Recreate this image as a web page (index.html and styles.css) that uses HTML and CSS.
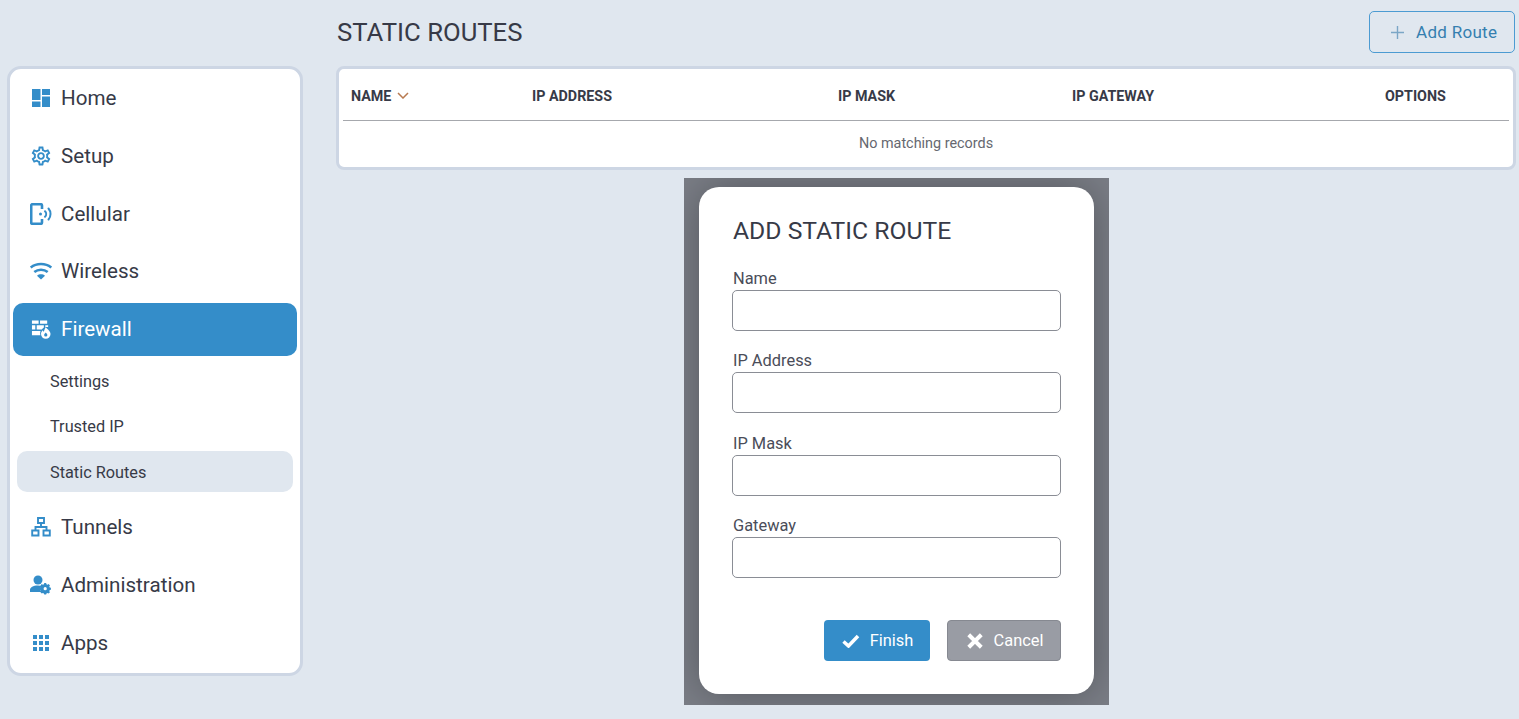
FILE: index.html
```html
<!DOCTYPE html>
<html lang="en">
<head>
    <meta charset="UTF-8">
    <title>Static Routes</title>
    <link rel="stylesheet" href="styles.css">
</head>
<body>
    <div class="page">
        <nav class="sidebar">
            <a class="nav-item">
                <svg class="nav-icon" viewBox="0 0 20 20"><path d="M1 1h8.500v11H1zM11 1h8v6h-8zM1 13.500h8.500V19H1zM11 8.500h8V19h-8z"/></svg>
                Home
            </a>
            <a class="nav-item">
                <svg class="nav-icon" viewBox="1.500 1.500 21 21"><path d="M19.43 12.98c.04-.32.07-.64.07-.98 0-.34-.03-.66-.07-.98l2.11-1.65c.19-.15.24-.42.12-.64l-2-3.46c-.09-.16-.26-.25-.44-.25-.06 0-.12.01-.17.03l-2.49 1c-.52-.4-1.08-.73-1.69-.98l-.38-2.65C14.46 2.18 14.25 2 14 2h-4c-.25 0-.46.18-.49.42l-.38 2.65c-.61.25-1.17.59-1.69.98l-2.49-1c-.06-.02-.12-.03-.18-.03-.17 0-.34.09-.43.25l-2 3.46c-.13.22-.07.49.12.64l2.11 1.65c-.04.32-.07.65-.07.98 0 .33.03.66.07.98l-2.11 1.65c-.19.15-.24.42-.12.64l2 3.46c.09.16.26.25.44.25.06 0 .12-.01.17-.03l2.49-1c.52.4 1.08.73 1.69.98l.38 2.65c.03.24.24.42.49.42h4c.25 0 .46-.18.49-.42l.38-2.65c.61-.25 1.17-.59 1.69-.98l2.49 1c.06.02.12.03.18.03.17 0 .34-.09.43-.25l2-3.46c.12-.22.07-.49-.12-.64l-2.11-1.65zm-1.98-1.71c.04.31.05.52.05.73 0 .21-.02.43-.05.73l-.14 1.13.89.7 1.08.84-.7 1.21-1.27-.51-1.04-.42-.9.68c-.43.32-.84.56-1.25.73l-1.06.43-.16 1.13-.2 1.35h-1.4l-.19-1.35-.16-1.13-1.06-.43c-.43-.18-.83-.41-1.23-.71l-.91-.7-1.06.43-1.27.51-.7-1.21 1.08-.84.89-.7-.14-1.13c-.03-.31-.05-.54-.05-.74s.02-.43.05-.73l.14-1.13-.89-.7-1.08-.84.7-1.21 1.27.51 1.04.42.9-.68c.43-.32.84-.56 1.25-.73l1.06-.43.16-1.13.2-1.35h1.39l.19 1.35.16 1.13 1.06.43c.43.18.83.41 1.23.71l.91.7 1.06-.43 1.27-.51.7 1.21-1.07.85-.89.7.14 1.13zM12 8c-2.21 0-4 1.790-4 4s1.790 4 4 4 4-1.790 4-4-1.790-4-4-4zm0 6c-1.100 0-2-.9-2-2s.9-2 2-2 2 .9 2 2-.9 2-2 2z"/></svg>
                Setup
            </a>
            <a class="nav-item">
                <svg class="nav-icon nav-icon-wide" viewBox="0 0 22 22"><path class="nav-stroke-flat" d="M12 6V2.500A1.300 1.300 0 0 0 10.700 1.200H2.500A1.300 1.300 0 0 0 1.200 2.500v17a1.300 1.300 0 0 0 1.300 1.300h8.200a1.300 1.300 0 0 0 1.300-1.300V16"/><circle cx="10.500" cy="11" r="1.500"/><path class="nav-stroke" d="M15 8.200a4 4 0 0 1 0 5.600M18.500 5.500a8.500 8.500 0 0 1 0 11"/></svg>
                Cellular
            </a>
            <a class="nav-item">
                <svg class="nav-icon nav-icon-wide" viewBox="0 0 22 20"><path class="nav-stroke-flat" d="M.7 6.500c5.800-4.700 14.800-4.700 20.600 0M4.300 11c3.800-3 9.600-3 13.400 0"/><path d="M11 18.500 7 14.700c2.300-1.800 5.700-1.800 8 0z"/></svg>
                Wireless
            </a>
            <a class="nav-item nav-item-active">
                <svg class="nav-icon" viewBox="0 0 21 20"><path d="M1 1h7v3.500H1zM9.500 1H17v3.500H9.500zM1 6h3.500v4.500H1zM6 6h7.500v2.400a7 7 0 0 0-2.200 2.100H6zM15 6h3v1.800h-3zM1 12h9a7 7 0 0 0-.2 4.500H1z"/><path fill-rule="evenodd" d="M15.500 8c.5 1.800 5 3.800 5 7.300a5 5 0 0 1-10 0c0-1.800 1-3.200 1.900-4 .2 1 .6 1.400 1.100 1.500.5-1.300 1.200-3.300 2-4.800zm0 5.700c-.3.800-1.700 1.300-1.700 2.500a1.700 1.700 0 0 0 3.400 0c0-1.200-1.400-1.700-1.700-2.500z"/></svg>
                Firewall
            </a>
            <div class="subnav">
                <a class="subnav-item">Settings</a>
                <a class="subnav-item">Trusted IP</a>
                <a class="subnav-item subnav-item-active">Static Routes</a>
            </div>
            <a class="nav-item">
                <svg class="nav-icon" viewBox="0 0 20 20"><path class="nav-line" d="M7 1h6v5H7zM1.200 13.500h6.300v5H1.200zM12.500 13.500h6.300v5h-6.300zM10 6v4M4.500 13.500V10h11v3.500"/></svg>
                Tunnels
            </a>
            <a class="nav-item">
                <svg class="nav-icon nav-icon-wide" viewBox="0 0 22 19"><circle cx="8" cy="4.500" r="4.500"/><path d="M0 16.500v-2C0 12 3 10 8 10c1.500 0 2.700.2 3.700.5a5 5 0 0 0-.2 6z"/><path fill-rule="evenodd" d="M15 9.500h2l.3 1.300 1.200.5 1.100-.7 1.400 1.400-.7 1.100.5 1.200 1.200.3v2l-1.200.3-.5 1.200.7 1.100-1.400 1.400-1.100-.7-1.200.5-.3 1.200h-2l-.3-1.200-1.200-.5-1.100.7-1.400-1.400.7-1.100-.5-1.200-1.200-.3v-2l1.200-.3.5-1.200-.7-1.100 1.400-1.400 1.100.7 1.200-.5zm1 4.300a1.700 1.700 0 1 0 0 3.400 1.700 1.700 0 0 0 0-3.400z" transform="translate(0 -1.500) scale(.95)"/></svg>
                Administration
            </a>
            <a class="nav-item">
                <svg class="nav-icon" viewBox="0 0 20 20"><path d="M2 2h4v4H2zM8 2h4v4H8zM14 2h4v4h-4zM2 8h4v4H2zM8 8h4v4H8zM14 8h4v4h-4zM2 14h4v4H2zM8 14h4v4H8zM14 14h4v4h-4z"/></svg>
                Apps
            </a>
        </nav>

        <main class="content">
            <header class="content-header">
                <h1 class="page-title">STATIC ROUTES</h1>
                <button class="btn-add">
                    <svg class="btn-add-icon" viewBox="0 0 14 14"><path d="M7 0v14M0 7h14"/></svg>
                    Add Route
                </button>
            </header>

            <section class="card">
                <table class="routes-table">
                    <colgroup>
                        <col class="col-name">
                        <col class="col-ip">
                        <col class="col-mask">
                        <col class="col-gateway">
                        <col>
                    </colgroup>
                    <thead>
                        <tr>
                            <th>NAME <svg class="sort-icon" viewBox="0 0 12 7"><path d="M1 1l5 5 5-5"/></svg></th>
                            <th>IP ADDRESS</th>
                            <th>IP MASK</th>
                            <th>IP GATEWAY</th>
                            <th>OPTIONS</th>
                        </tr>
                    </thead>
                    <tbody>
                        <tr>
                            <td class="empty-row" colspan="5">No matching records</td>
                        </tr>
                    </tbody>
                </table>
            </section>
        </main>
    </div>

    <div class="modal-frame">
        <form class="modal">
            <h2 class="modal-title">ADD STATIC ROUTE</h2>
            <div class="field">
                <label class="field-label" for="routeName">Name</label>
                <input class="field-input" id="routeName" type="text">
            </div>
            <div class="field">
                <label class="field-label" for="routeIp">IP Address</label>
                <input class="field-input" id="routeIp" type="text">
            </div>
            <div class="field">
                <label class="field-label" for="routeMask">IP Mask</label>
                <input class="field-input" id="routeMask" type="text">
            </div>
            <div class="field">
                <label class="field-label" for="routeGateway">Gateway</label>
                <input class="field-input" id="routeGateway" type="text">
            </div>
            <div class="modal-actions">
                <button class="btn btn-primary" type="button">
                    <svg class="btn-icon" viewBox="0 0 18 14"><path d="M1.500 7.500l5 4.500L16 2"/></svg>
                    Finish
                </button>
                <button class="btn btn-secondary" type="button">
                    <svg class="btn-icon btn-icon-x" viewBox="0 0 14 14"><path d="M1.500 1.500l11 11M12.500 1.500l-11 11"/></svg>
                    Cancel
                </button>
            </div>
        </form>
    </div>
</body>
</html>
```

FILE: styles.css
```css
* {
    margin: 0;
    padding: 0;
    box-sizing: border-box;
}

body {
    width: 100vw;
    height: 100vh;
    background: #e0e7ef;
    color: #373a47;
    position: relative;
    overflow: hidden;
    font-family: Roboto, "Liberation Sans", sans-serif;
}

.page {
    display: flex;
    align-items: flex-start;
    padding-left: 7px;
}

/* Sidebar */
.sidebar {
    width: 296px;
    height: 610px;
    margin-top: 66px;
    padding: 3px;
    background: white;
    border: 3px solid #cdd6e4;
    border-radius: 14px;
    display: flex;
    flex-direction: column;
}

.nav-item {
    height: 53px;
    flex: none;
    margin-bottom: 4.8px;
    padding-left: 18px;
    padding-bottom: 0.8px;
    display: flex;
    align-items: center;
    gap: 10px;
    font-size: 20.6px;
    border-radius: 10px;
}

.nav-icon {
    width: 20px;
    height: 20px;
    flex: none;
    fill: #348dc9;
}

.nav-icon-wide {
    width: 22px;
    height: 22px;
    margin-left: -1px;
    margin-right: -1px;
}

.nav-stroke {
    fill: none;
    stroke: #348dc9;
    stroke-width: 2;
    stroke-linecap: round;
}

.nav-stroke-flat {
    fill: none;
    stroke: #348dc9;
    stroke-width: 2.600;
}

.nav-line {
    fill: none;
    stroke: #348dc9;
    stroke-width: 1.900;
}

.nav-item-active {
    background: #348dc9;
    color: white;
}

.nav-item-active .nav-icon {
    fill: white;
}

.subnav {
    display: flex;
    flex-direction: column;
    gap: 4.5px;
    padding: 0 4px;
    margin-top: -0.5px;
    margin-bottom: 8.4px;
}

.subnav-item {
    height: 41px;
    padding-left: 33px;
    padding-top: 1px;
    display: flex;
    align-items: center;
    font-size: 16.3px;
    border-radius: 10px;
}

.subnav-item-active {
    background: #e0e7ef;
}

/* Main content */
.content {
    width: 1180px;
    margin-left: 33px;
}

.content-header {
    height: 66px;
    display: flex;
    justify-content: space-between;
    align-items: flex-start;
}

.page-title {
    margin: 17px 0 0 1px;
    font-size: 25.7px;
    font-weight: 400;
    line-height: 30px;
}

.btn-add {
    width: 146px;
    height: 42px;
    margin: 11px 1px 0 0;
    padding-left: 21px;
    display: flex;
    align-items: center;
    gap: 12px;
    background: transparent;
    color: #357fb0;
    border: 1px solid #4c9bd2;
    border-radius: 5px;
    font-family: inherit;
    font-size: 17px;
    letter-spacing: 0.3px;
}

.btn-add-icon {
    width: 13px;
    height: 13px;
    fill: none;
    stroke: #7ba6c6;
    stroke-width: 1.500;
}

.card {
    height: 104px;
    padding: 0 4px;
    background: white;
    border: 3px solid #cdd6e4;
    border-radius: 8px;
}

.routes-table {
    width: 100%;
    table-layout: fixed;
    border-collapse: collapse;
}

.col-name { width: 181px; }
.col-ip { width: 306px; }
.col-mask { width: 234px; }
.col-gateway { width: 313px; }

.routes-table th {
    height: 51px;
    padding: 3px 8px 0;
    text-align: left;
    font-size: 14.3px;
    font-weight: 700;
    border-bottom: 1px solid #a6a8ad;
}

.sort-icon {
    width: 12px;
    height: 7px;
    margin-left: 2px;
    vertical-align: 2px;
    fill: none;
    stroke: #b87a50;
    stroke-width: 1.500;
}

.empty-row {
    height: 46px;
    text-align: center;
    font-size: 14.4px;
    color: #666870;
}

/* Dialog */
.modal-frame {
    position: absolute;
    left: 684px;
    top: 178px;
    width: 425px;
    height: 527px;
    padding: 9px 15px 11px;
    background: #7b7e86;
    overflow: hidden;
}

.modal {
    height: 507px;
    padding: 29px 33px 33px;
    background: white;
    border-radius: 20px;
    box-shadow: 0 0 40px #55585f;
}

.modal-title {
    margin-bottom: 22.8px;
    margin-left: 1px;
    font-size: 24.7px;
    font-weight: 400;
    line-height: 30px;
}

.field {
    margin-bottom: 20.4px;
}

.field-label {
    display: block;
    margin-left: 1px;
    margin-bottom: 2.1px;
    font-size: 16.400px;
    line-height: 19px;
    color: #4a4d59;
}

.field-input {
    display: block;
    width: 329px;
    height: 41px;
    background: white;
    border: 1px solid #8a8d95;
    border-radius: 5px;
}

.modal-actions {
    margin-top: 41.6px;
    display: flex;
    justify-content: flex-end;
    gap: 17px;
}

.btn {
    height: 41px;
    padding-top: 1px;
    display: flex;
    align-items: center;
    justify-content: center;
    border: 1px solid transparent;
    border-radius: 4px;
    color: white;
    font-family: inherit;
    font-size: 16.400px;
}

.btn-icon {
    height: 14px;
    width: 18px;
    fill: none;
    stroke: white;
    stroke-width: 3.500;
}

.btn-icon-x {
    width: 16px;
    height: 16px;
}

.btn-primary {
    width: 106px;
    padding-left: 1px;
    gap: 10px;
    background: #348dc9;
}

.btn-secondary {
    width: 114px;
    padding-left: 2px;
    gap: 11px;
    background: #999ca4;
    border-color: #868991;
}
```
